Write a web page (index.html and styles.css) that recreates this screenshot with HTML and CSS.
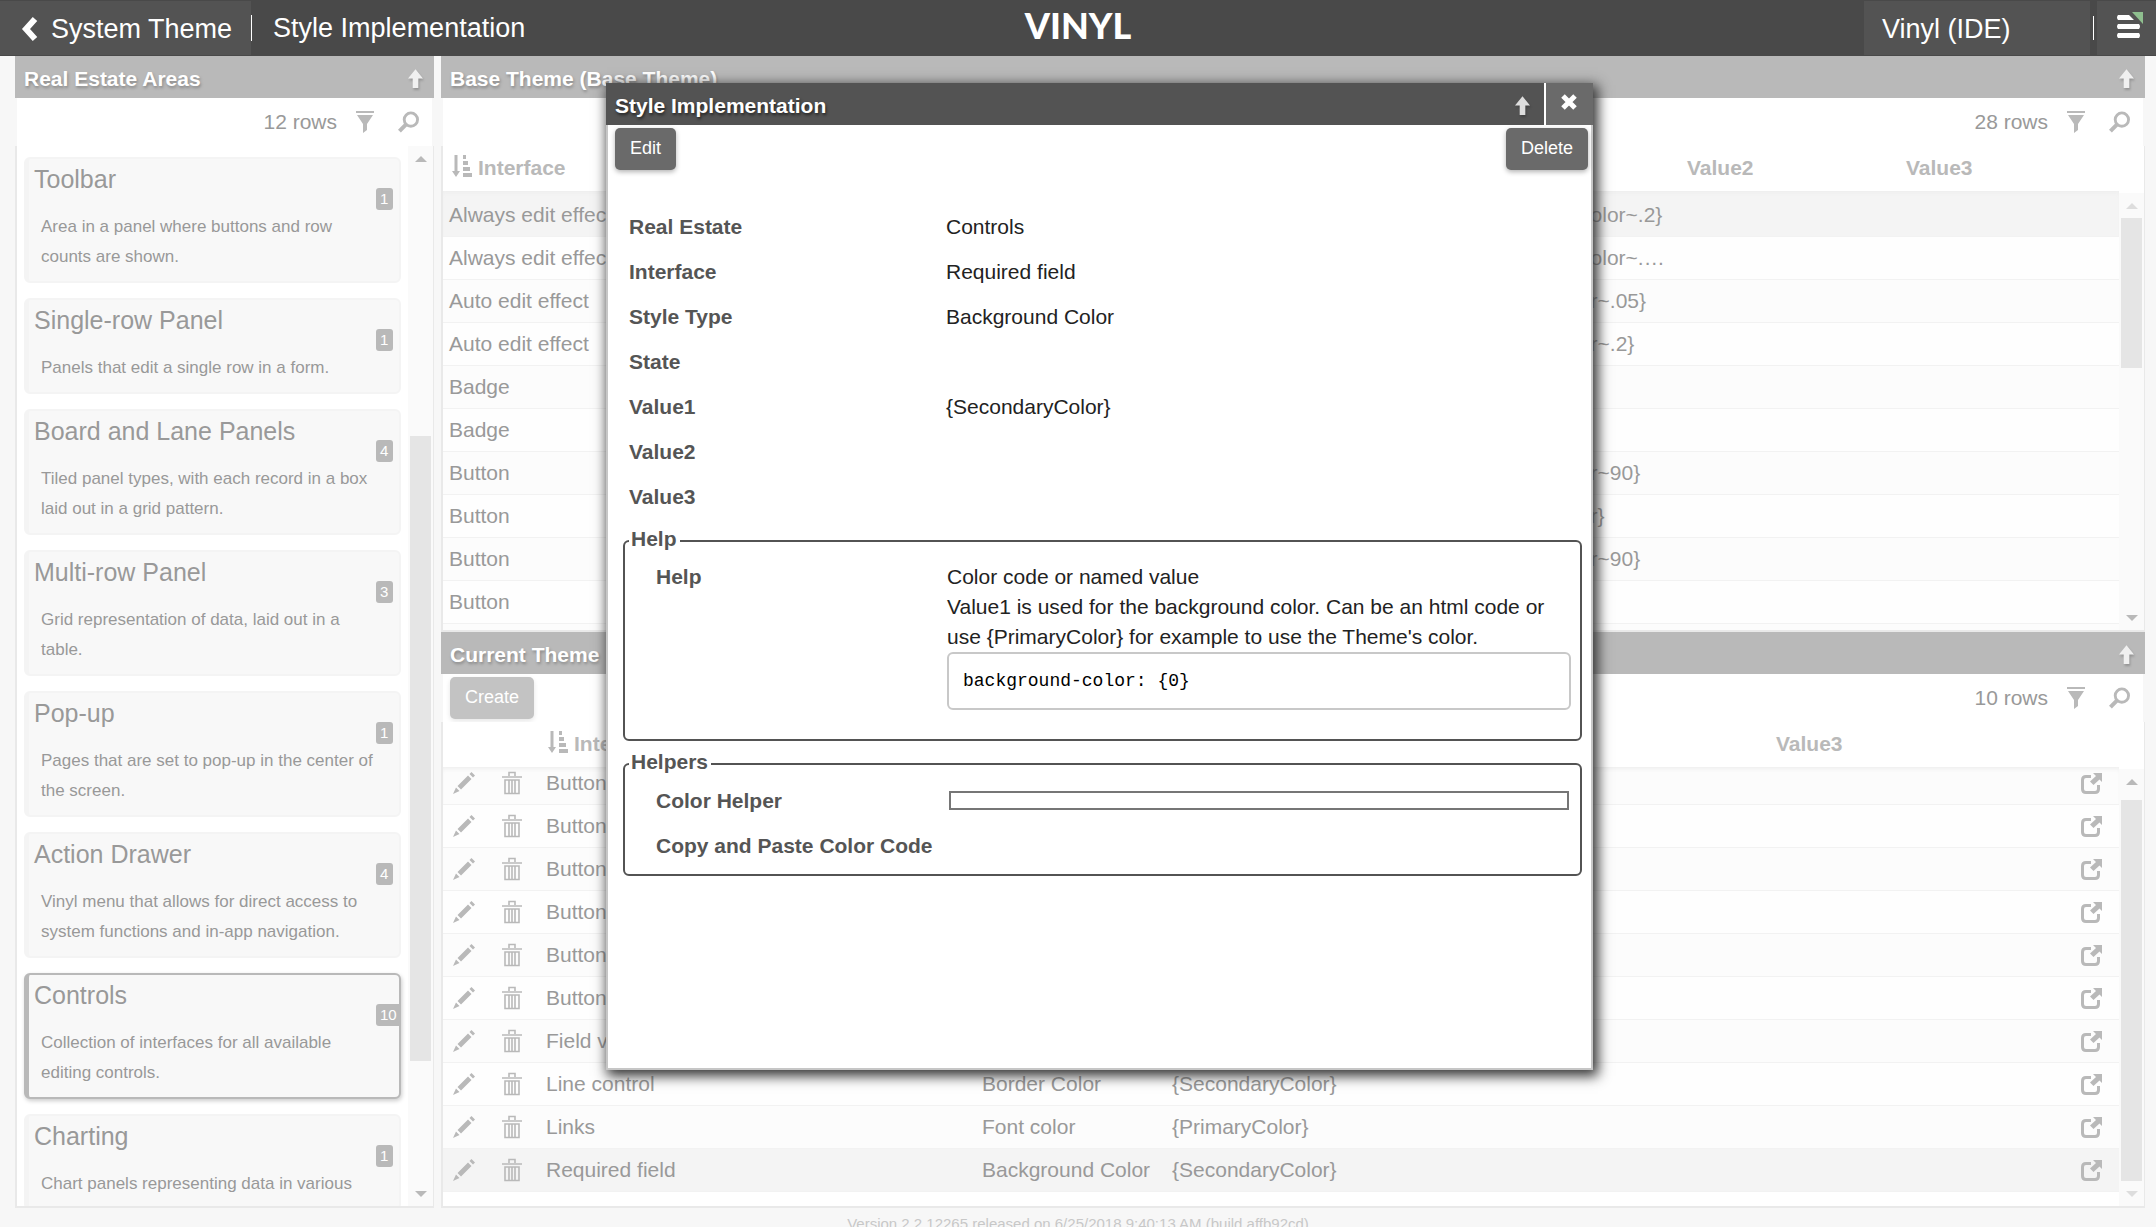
FILE: index.html
```html
<!DOCTYPE html>
<html lang="en">
<head>
    <meta charset="UTF-8">
    <meta name="viewport" content="width=device-width, initial-scale=1.0">
    <title>Style Implementation</title>
    <link rel="stylesheet" href="styles.css">
</head>
<body>
    <!-- shared icons -->
    <svg class="sprite" aria-hidden="true">
        <symbol id="arrow-up" viewBox="0 0 16 20"><path d="M8 0l8 10h-5v10H5V10H0z"/></symbol>
        <symbol id="filter" viewBox="0 0 18 22"><path d="M0 0h18v2H0zM1 4h16l-6 9v6l-4 3v-9z"/></symbol>
        <symbol id="search" viewBox="0 0 22 22"><circle cx="13.500" cy="8.500" r="7" fill="none" stroke="currentColor" stroke-width="3"/><path d="M7 12l3 3-7 7-3-3z"/></symbol>
        <symbol id="sort" viewBox="0 0 20 22"><path d="M2.500 0h3v16H8l-4 6-4-6h2.500zM11 0h3v4h-3zM11 6h5v4h-5zM11 12h7v4h-7zM11 18h9v4h-9z"/></symbol>
        <symbol id="edit" viewBox="0 0 22 22"><path d="M16.500 2L18.500 0 22 3.500l-2 2zM15 3.500L18.500 7 8 17.500 4.500 14zM3 15.500L6.500 19 0 22z"/></symbol>
        <symbol id="trash" viewBox="0 0 20 24"><path d="M7 5V1.500h6V5M0 6h20M3 9h14v13.500H3zM7 9v13M10 9v13M13 9v13" fill="none" stroke="currentColor" stroke-width="1.600"/></symbol>
        <symbol id="open" viewBox="0 0 21 21"><path d="M10 3.500H5Q1.500 3.500 1.500 7v9q0 3.500 3.500 3.500h9q3.500 0 3.500-3.500v-4" fill="none" stroke="currentColor" stroke-width="3"/><path d="M12 0h9v9l-2.500-2.500L12.500 12 9 8.500 15 3z"/></symbol>
    </svg>

    <header class="top-bar">
        <a href="#" class="back">
            <svg class="chevron" viewBox="0 0 18 26"><path d="M14 3L5 13l9 10" fill="none" stroke="currentColor" stroke-width="6"/></svg>
            System Theme
        </a>
        <h1 class="page-title">Style Implementation</h1>
        <div class="logo">VINYL</div>
        <a href="#" class="app-name">Vinyl (IDE)</a>
        <button type="button" class="menu" aria-label="Menu">
            <svg viewBox="0 0 28 28"><path d="M3 3h11l5 5H3q-2-2.500 0-5zM3 12h21q2 2.500 0 5H3q-2-2.500 0-5zM3 21h21q2 2.500 0 5H3q-2-2.500 0-5z"/><path class="corner" d="M17 0h11v12z"/></svg>
        </button>
    </header>

    <main class="layout">
        <section class="panel areas">
            <h2 class="panel-head">Real Estate Areas <svg class="up"><use href="#arrow-up"/></svg></h2>
            <div class="toolbar">
                <span class="count">12 rows</span>
                <button type="button" class="icon-btn" aria-label="Filter"><svg class="filter"><use href="#filter"/></svg></button>
                <button type="button" class="icon-btn" aria-label="Search"><svg class="search"><use href="#search"/></svg></button>
            </div>
            <div class="panel-body">
                <div class="cards">
                    <article class="card">
                        <h3>Toolbar</h3>
                        <p>Area in a panel where buttons and row counts are shown.</p>
                        <span class="badge">1</span>
                    </article>
                    <article class="card">
                        <h3>Single-row Panel</h3>
                        <p>Panels that edit a single row in a form.</p>
                        <span class="badge">1</span>
                    </article>
                    <article class="card">
                        <h3>Board and Lane Panels</h3>
                        <p>Tiled panel types, with each record in a box laid out in a grid pattern.</p>
                        <span class="badge">4</span>
                    </article>
                    <article class="card">
                        <h3>Multi-row Panel</h3>
                        <p>Grid representation of data, laid out in a table.</p>
                        <span class="badge">3</span>
                    </article>
                    <article class="card">
                        <h3>Pop-up</h3>
                        <p>Pages that are set to pop-up in the center of the screen.</p>
                        <span class="badge">1</span>
                    </article>
                    <article class="card">
                        <h3>Action Drawer</h3>
                        <p>Vinyl menu that allows for direct access to system functions and in-app navigation.</p>
                        <span class="badge">4</span>
                    </article>
                    <article class="card active">
                        <h3>Controls</h3>
                        <p>Collection of interfaces for all available editing controls.</p>
                        <span class="badge">10</span>
                    </article>
                    <article class="card">
                        <h3>Charting</h3>
                        <p>Chart panels representing data in various</p>
                        <span class="badge">1</span>
                    </article>
                </div>
                <div class="scrollbar">
                    <div class="step up-step"></div>
                    <div class="track" style="flex-grow: 265"></div>
                    <div class="thumb" style="flex-grow: 625"></div>
                    <div class="track" style="flex-grow: 120"></div>
                    <div class="step down-step"></div>
                </div>
            </div>
        </section>

        <div class="themes">
            <section class="panel">
                <h2 class="panel-head">Base Theme (Base Theme) <svg class="up"><use href="#arrow-up"/></svg></h2>
                <div class="toolbar">
                    <span class="count">28 rows</span>
                    <button type="button" class="icon-btn" aria-label="Filter"><svg class="filter"><use href="#filter"/></svg></button>
                    <button type="button" class="icon-btn" aria-label="Search"><svg class="search"><use href="#search"/></svg></button>
                </div>
                <div class="panel-body">
                    <div class="table-wrap">
                        <table class="grid base-grid">
                            <colgroup>
                                <col class="col-interface"><col class="col-type"><col><col class="col-value"><col class="col-value"><col class="col-value">
                            </colgroup>
                            <thead>
                                <tr><th><svg class="sort"><use href="#sort"/></svg>Interface</th><th></th><th></th><th></th><th>Value2</th><th>Value3</th></tr>
                            </thead>
                            <tbody>
                                <tr class="selected"><td>Always edit effect</td><td></td><td></td><td>{SecondaryColor~.2}</td><td></td><td></td></tr>
                                <tr><td>Always edit effect</td><td></td><td></td><td>{SecondaryColor~.…</td><td></td><td></td></tr>
                                <tr><td>Auto edit effect</td><td></td><td></td><td>{PrimaryColor~.05}</td><td></td><td></td></tr>
                                <tr><td>Auto edit effect</td><td></td><td></td><td>{PrimaryColor~.2}</td><td></td><td></td></tr>
                                <tr><td>Badge</td><td></td><td></td><td></td><td></td><td></td></tr>
                                <tr><td>Badge</td><td></td><td></td><td></td><td></td><td></td></tr>
                                <tr><td>Button</td><td></td><td></td><td>{PrimaryColor~90}</td><td></td><td></td></tr>
                                <tr><td>Button</td><td></td><td></td><td>{PrimaryColor}</td><td></td><td></td></tr>
                                <tr><td>Button</td><td></td><td></td><td>{PrimaryColor~90}</td><td></td><td></td></tr>
                                <tr><td>Button</td><td></td><td></td><td></td><td></td><td></td></tr>
                                <tr><td></td><td></td><td></td><td></td><td></td><td></td></tr>
                            </tbody>
                        </table>
                    </div>
                    <div class="scrollbar below-head">
                        <div class="step up-step disabled"></div>
                        <div class="thumb" style="flex-grow: 150"></div>
                        <div class="track" style="flex-grow: 237"></div>
                        <div class="step down-step"></div>
                    </div>
                </div>
            </section>

            <section class="panel">
                <h2 class="panel-head">Current Theme <svg class="up"><use href="#arrow-up"/></svg></h2>
                <div class="toolbar">
                    <button type="button" class="btn create">Create</button>
                    <span class="count">10 rows</span>
                    <button type="button" class="icon-btn" aria-label="Filter"><svg class="filter"><use href="#filter"/></svg></button>
                    <button type="button" class="icon-btn" aria-label="Search"><svg class="search"><use href="#search"/></svg></button>
                </div>
                <div class="panel-body">
                    <div class="table-wrap">
                        <table class="grid current-grid">
                            <colgroup>
                                <col class="col-icon"><col class="col-icon"><col class="col-name"><col class="col-style"><col class="col-value"><col><col class="col-last"><col class="col-open">
                            </colgroup>
                            <thead>
                                <tr><th></th><th></th><th><svg class="sort"><use href="#sort"/></svg>Interface</th><th></th><th></th><th></th><th>Value3</th><th></th></tr>
                            </thead>
                            <tbody>
                                <tr>
                                    <td><button type="button" class="icon-btn" aria-label="Edit"><svg class="edit"><use href="#edit"/></svg></button></td>
                                    <td><button type="button" class="icon-btn" aria-label="Delete"><svg class="trash"><use href="#trash"/></svg></button></td>
                                    <td>Button</td><td></td><td></td><td></td><td></td>
                                    <td><button type="button" class="icon-btn" aria-label="Open"><svg class="open"><use href="#open"/></svg></button></td>
                                </tr>
                                <tr>
                                    <td><button type="button" class="icon-btn" aria-label="Edit"><svg class="edit"><use href="#edit"/></svg></button></td>
                                    <td><button type="button" class="icon-btn" aria-label="Delete"><svg class="trash"><use href="#trash"/></svg></button></td>
                                    <td>Button</td><td></td><td></td><td></td><td></td>
                                    <td><button type="button" class="icon-btn" aria-label="Open"><svg class="open"><use href="#open"/></svg></button></td>
                                </tr>
                                <tr>
                                    <td><button type="button" class="icon-btn" aria-label="Edit"><svg class="edit"><use href="#edit"/></svg></button></td>
                                    <td><button type="button" class="icon-btn" aria-label="Delete"><svg class="trash"><use href="#trash"/></svg></button></td>
                                    <td>Button</td><td></td><td></td><td></td><td></td>
                                    <td><button type="button" class="icon-btn" aria-label="Open"><svg class="open"><use href="#open"/></svg></button></td>
                                </tr>
                                <tr>
                                    <td><button type="button" class="icon-btn" aria-label="Edit"><svg class="edit"><use href="#edit"/></svg></button></td>
                                    <td><button type="button" class="icon-btn" aria-label="Delete"><svg class="trash"><use href="#trash"/></svg></button></td>
                                    <td>Button</td><td></td><td></td><td></td><td></td>
                                    <td><button type="button" class="icon-btn" aria-label="Open"><svg class="open"><use href="#open"/></svg></button></td>
                                </tr>
                                <tr>
                                    <td><button type="button" class="icon-btn" aria-label="Edit"><svg class="edit"><use href="#edit"/></svg></button></td>
                                    <td><button type="button" class="icon-btn" aria-label="Delete"><svg class="trash"><use href="#trash"/></svg></button></td>
                                    <td>Button</td><td></td><td></td><td></td><td></td>
                                    <td><button type="button" class="icon-btn" aria-label="Open"><svg class="open"><use href="#open"/></svg></button></td>
                                </tr>
                                <tr>
                                    <td><button type="button" class="icon-btn" aria-label="Edit"><svg class="edit"><use href="#edit"/></svg></button></td>
                                    <td><button type="button" class="icon-btn" aria-label="Delete"><svg class="trash"><use href="#trash"/></svg></button></td>
                                    <td>Button</td><td></td><td></td><td></td><td></td>
                                    <td><button type="button" class="icon-btn" aria-label="Open"><svg class="open"><use href="#open"/></svg></button></td>
                                </tr>
                                <tr>
                                    <td><button type="button" class="icon-btn" aria-label="Edit"><svg class="edit"><use href="#edit"/></svg></button></td>
                                    <td><button type="button" class="icon-btn" aria-label="Delete"><svg class="trash"><use href="#trash"/></svg></button></td>
                                    <td>Field value</td><td></td><td></td><td></td><td></td>
                                    <td><button type="button" class="icon-btn" aria-label="Open"><svg class="open"><use href="#open"/></svg></button></td>
                                </tr>
                                <tr>
                                    <td><button type="button" class="icon-btn" aria-label="Edit"><svg class="edit"><use href="#edit"/></svg></button></td>
                                    <td><button type="button" class="icon-btn" aria-label="Delete"><svg class="trash"><use href="#trash"/></svg></button></td>
                                    <td>Line control</td><td>Border Color</td><td>{SecondaryColor}</td><td></td><td></td>
                                    <td><button type="button" class="icon-btn" aria-label="Open"><svg class="open"><use href="#open"/></svg></button></td>
                                </tr>
                                <tr>
                                    <td><button type="button" class="icon-btn" aria-label="Edit"><svg class="edit"><use href="#edit"/></svg></button></td>
                                    <td><button type="button" class="icon-btn" aria-label="Delete"><svg class="trash"><use href="#trash"/></svg></button></td>
                                    <td>Links</td><td>Font color</td><td>{PrimaryColor}</td><td></td><td></td>
                                    <td><button type="button" class="icon-btn" aria-label="Open"><svg class="open"><use href="#open"/></svg></button></td>
                                </tr>
                                <tr class="selected">
                                    <td><button type="button" class="icon-btn" aria-label="Edit"><svg class="edit"><use href="#edit"/></svg></button></td>
                                    <td><button type="button" class="icon-btn" aria-label="Delete"><svg class="trash"><use href="#trash"/></svg></button></td>
                                    <td>Required field</td><td>Background Color</td><td>{SecondaryColor}</td><td></td><td></td>
                                    <td><button type="button" class="icon-btn" aria-label="Open"><svg class="open"><use href="#open"/></svg></button></td>
                                </tr>
                            </tbody>
                        </table>
                    </div>
                    <div class="scrollbar below-head">
                        <div class="step up-step"></div>
                        <div class="track" style="flex-grow: 6"></div>
                        <div class="thumb" style="flex-grow: 382"></div>
                        <div class="step down-step disabled"></div>
                    </div>
                </div>
            </section>
        </div>
    </main>

    <footer class="version">Version 2.2.12265 released on 6/25/2018 9:40:13 AM (build affb92cd)</footer>

    <div class="popup" role="dialog" aria-labelledby="popupTitle">
        <div class="popup-head">
            <h2 id="popupTitle">Style Implementation</h2>
            <svg class="up"><use href="#arrow-up"/></svg>
            <button type="button" class="close" aria-label="Close">
                <svg viewBox="0 0 16 16"><path d="M2 2l12 12M14 2L2 14" fill="none" stroke="currentColor" stroke-width="5"/></svg>
            </button>
        </div>
        <div class="popup-content">
            <div class="popup-tools">
                <button type="button" class="btn">Edit</button>
                <button type="button" class="btn">Delete</button>
            </div>
            <div class="form">
                <dl class="fields">
                    <dt>Real Estate</dt><dd>Controls</dd>
                    <dt>Interface</dt><dd>Required field</dd>
                    <dt>Style Type</dt><dd>Background Color</dd>
                    <dt>State</dt><dd></dd>
                    <dt>Value1</dt><dd>{SecondaryColor}</dd>
                    <dt>Value2</dt><dd></dd>
                    <dt>Value3</dt><dd></dd>
                </dl>
                <fieldset class="group help">
                    <legend>Help</legend>
                    <div class="group-row">
                        <div class="label">Help</div>
                        <div class="help-text">
                            <p>Color code or named value</p>
                            <p>Value1 is used for the background color. Can be an html code or use {PrimaryColor} for example to use the Theme's color.</p>
                            <pre>background-color: {0}</pre>
                        </div>
                    </div>
                </fieldset>
                <fieldset class="group helpers">
                    <legend>Helpers</legend>
                    <div class="group-row">
                        <label class="label" for="colorHelper">Color Helper</label>
                        <input type="text" id="colorHelper" name="colorHelper">
                    </div>
                    <div class="group-row">
                        <div class="label">Copy and Paste Color Code</div>
                    </div>
                </fieldset>
            </div>
        </div>
    </div>
</body>
</html>
```
FILE: styles.css
```css
* {
    box-sizing: border-box;
}

body {
    margin: 0;
    height: 100vh;
    overflow: hidden;
    display: flex;
    flex-direction: column;
    position: relative;
    background-color: #f7f7f7;
    color: #999;
    font-family: "Liberation Sans", Arial, sans-serif;
    font-size: 21px;
}

h1, h2, h3, p, dl, dd, pre {
    margin: 0;
}

button {
    font-family: inherit;
    cursor: pointer;
}

svg {
    display: block;
    fill: currentColor;
}

.sprite {
    position: absolute;
    width: 0;
    height: 0;
}

/* top bar */
.top-bar {
    flex: none;
    position: relative;
    display: flex;
    align-items: center;
    height: 56px;
    padding: 1px 0;
    background-color: #494949;
    color: #fff;
    font-size: 27px;
}

.top-bar a {
    color: #fff;
    text-decoration: none;
}

.back {
    display: flex;
    align-items: center;
    gap: 12px;
    height: 54px;
    padding: 2px 19px 0 21px;
    background-color: #535353;
}

.chevron {
    width: 18px;
    height: 26px;
}

.page-title {
    padding-left: 21px;
    border-left: 1px solid #fff;
    font-size: 27px;
    font-weight: normal;
    line-height: 26px;
}

.logo {
    position: absolute;
    left: 50%;
    top: 3px;
    transform: translateX(-50%);
    font-family: Lato, "Liberation Sans", sans-serif;
    font-size: 36px;
    font-weight: 900;
    line-height: 44px;
}

.app-name {
    display: flex;
    align-items: center;
    width: 226px;
    height: 54px;
    margin-left: auto;
    padding: 2px 0 0 18px;
    background-color: #535353;
}

.menu {
    position: relative;
    width: 59px;
    height: 54px;
    margin-left: 7px;
    padding: 0 0 4px 18px;
    border: 0;
    background-color: #535353;
    color: #fff;
}

.menu::before {
    content: "";
    position: absolute;
    left: -4px;
    top: 15px;
    width: 1px;
    height: 24px;
    background-color: #fff;
}

.menu svg {
    width: 28px;
    height: 28px;
}

.corner {
    fill: #8fbf8f;
}

/* panels */
.layout {
    flex: 1;
    min-height: 0;
    display: flex;
    gap: 7px;
    padding: 0 11px 0 15px;
}

.areas {
    flex: none;
    width: 419px;
}

.themes {
    flex: 1;
    min-width: 0;
    display: flex;
    flex-direction: column;
}

.panel {
    display: flex;
    flex-direction: column;
}

.themes .panel {
    flex: 1 1 0;
    min-height: 0;
}

.panel-head {
    flex: none;
    display: flex;
    align-items: center;
    justify-content: space-between;
    height: 42px;
    padding: 3px 11px 0 9px;
    background-color: #b9b9b9;
    color: #fff;
    font-size: 21px;
    text-shadow: 1px 2px 3px #888;
}

.up {
    width: 15px;
    height: 19px;
    color: #f0f0f0;
    filter: drop-shadow(1px 2px 1px rgba(0, 0, 0, 0.2));
}

.toolbar {
    flex: none;
    display: flex;
    align-items: center;
    height: 48px;
    margin: 0 2px;
    padding: 0 13px 0 7px;
    background-color: #fff;
}

.count {
    margin-left: auto;
    margin-right: 19px;
}

.icon-btn {
    display: block;
    padding: 0;
    border: 0;
    background: none;
    color: #b9b9b9;
}

.filter {
    width: 18px;
    height: 22px;
}

.search {
    width: 21px;
    height: 22px;
    margin-left: 24px;
}

.btn {
    height: 42px;
    padding: 0 15px 2px;
    border: 0;
    border-radius: 5px;
    background-color: #6a6a6a;
    color: #fff;
    font-size: 18px;
    box-shadow: 0 2px 5px rgba(0, 0, 0, 0.3);
}

.btn.create {
    background-color: #c3c3c3;
    box-shadow: 0 2px 5px rgba(0, 0, 0, 0.1);
}

.panel-body {
    flex: 1;
    min-height: 0;
    display: flex;
    overflow: hidden;
    border: solid #e9e9e9;
    border-width: 0 1px 2px 2px;
    background-color: #fff;
}

/* real estate cards */
.cards {
    flex: 1;
    display: flex;
    flex-direction: column;
    gap: 15px;
    padding: 11px 7px 0;
    overflow: hidden;
}

.card {
    flex: none;
    position: relative;
    padding: 5px 15px 9px 5px;
    overflow: hidden;
    border: 2px solid #f4f4f4;
    border-left-width: 5px;
    border-radius: 6px;
    background-color: #f8f8f8;
}

.card.active {
    border-color: #b9b9b9;
    box-shadow: 1px 2px 4px rgba(0, 0, 0, 0.2);
}

.card h3 {
    font-size: 25px;
    font-weight: normal;
    line-height: 30px;
}

.card p {
    padding: 18px 0 0 7px;
    font-size: 17px;
    line-height: 30px;
}

.badge {
    position: absolute;
    top: 29px;
    left: calc(100% - 23px);
    padding: 0 5px 0 4px;
    border-radius: 3px;
    background-color: #b9b9b9;
    color: #fff;
    font-size: 15px;
    line-height: 22px;
}

/* scrollbars */
.scrollbar {
    flex: none;
    display: flex;
    flex-direction: column;
    width: 25px;
    padding: 0 2px;
    background-color: #fafafa;
}

.scrollbar.below-head {
    margin-top: 47px;
}

.step {
    flex: none;
    display: flex;
    align-items: center;
    justify-content: center;
    height: 25px;
}

.step::before {
    content: "";
    border: solid transparent;
    border-width: 0 6px;
}

.up-step::before {
    border-bottom: 6px solid #b9b9b9;
}

.down-step::before {
    border-top: 6px solid #b9b9b9;
}

.up-step.disabled::before {
    border-bottom-color: #ddd;
}

.down-step.disabled::before {
    border-top-color: #ddd;
}

.thumb {
    flex-basis: 0;
    background-color: #e5e5e5;
}

.track {
    flex-basis: 0;
}

/* tables */
.table-wrap {
    flex: 1;
    min-width: 0;
    overflow: hidden;
}

.grid {
    width: 100%;
    table-layout: fixed;
    border-collapse: separate;
    border-spacing: 0;
}

.grid th {
    height: 45px;
    padding: 0 6px 2px;
    color: #b9b9b9;
    text-align: left;
}

.grid td {
    height: 43px;
    padding: 0 6px;
    border-bottom: 1px solid #f2f2f2;
    white-space: nowrap;
}

.grid tbody tr {
    background-color: #fefefe;
}

.grid tbody tr:nth-child(odd) {
    background-color: #fcfcfc;
}

.grid tbody tr.selected {
    background-color: #f4f4f4;
}

.grid tbody tr:first-child {
    box-shadow: inset 0 4px 4px -2px #eee;
}

.base-grid tbody tr:first-child td {
    height: 46px;
    padding-top: 3px;
}

/* first row is partly scrolled under the header */
.current-grid tbody tr:first-child td {
    height: 38px;
    padding-bottom: 5px;
}

.sort {
    display: inline-block;
    width: 20px;
    height: 22px;
    margin: 0 6px 0 3px;
    vertical-align: -2px;
}

.col-interface { width: 400px; }
.col-type { width: 300px; }
.col-value { width: 219px; }
.col-icon { width: 48px; }
.col-name { width: 436px; }
.col-style { width: 190px; }
.col-last { width: 295px; }
.col-open { width: 54px; }

.current-grid td {
    padding-left: 7px;
}

.edit {
    width: 22px;
    height: 22px;
    margin-left: 3px;
}

.trash {
    width: 20px;
    height: 24px;
    margin-left: 4px;
}

.open {
    width: 21px;
    height: 21px;
    margin-left: 9px;
}

.version {
    flex: none;
    height: 19px;
    padding-top: 7px;
    overflow: hidden;
    color: #c8c8c8;
    font-size: 15px;
    line-height: 18px;
    text-align: center;
}

/* popup */
.popup {
    position: absolute;
    top: 83px;
    right: 563px;
    bottom: 157px;
    left: 606px;
    display: flex;
    flex-direction: column;
    box-shadow: 3px 4px 12px 2px #333;
    color: #222;
}

.popup-head {
    flex: none;
    display: flex;
    align-items: center;
    height: 42px;
    padding-left: 9px;
    background-color: #535353;
    color: #fff;
}

.popup-head h2 {
    flex: 1;
    padding-top: 3px;
    font-size: 21px;
    text-shadow: 1px 2px 3px #222;
}

.popup-head .up {
    margin: 2px 14px 0 0;
    color: #ddd;
}

.close {
    width: 49px;
    height: 42px;
    padding: 0 0 12px 15px;
    border: 0;
    border-left: 2px solid #fff;
    background-color: #6a6a6a;
    color: #fff;
}

.close svg {
    width: 16px;
    height: 16px;
    margin-top: 7px;
}

.popup-content {
    flex: 1;
    border: solid #c6c6c6;
    border-width: 0 2px 2px;
    background-color: #fff;
}

.popup-tools {
    display: flex;
    justify-content: space-between;
    padding: 3px 3px 3px 7px;
}

.form {
    padding: 31px 9px 0 15px;
}

.fields {
    display: grid;
    grid-template-columns: 317px 1fr;
    grid-auto-rows: 45px;
    align-items: center;
    padding: 0 0 8px 6px;
}

.fields dt,
.label,
.group legend {
    color: #555;
    font-weight: bold;
}

.group {
    min-width: 0;
    margin: 0 0 9px;
    padding: 0;
    border: 2px solid #535353;
    border-radius: 6px;
}

.group legend {
    margin-left: 4px;
    padding: 0 3px 4px 2px;
    line-height: 24px;
}

.group-row {
    display: grid;
    grid-template-columns: 291px 1fr;
    padding: 0 9px 0 31px;
    line-height: 30px;
}

.help .group-row {
    padding-top: 7px;
    padding-bottom: 29px;
}

.helpers {
    padding-bottom: 6px;
}

.helpers .group-row {
    align-items: center;
    height: 45px;
}

.help-text pre {
    padding: 14px;
    border: 2px solid #c8c8c8;
    border-radius: 6px;
    color: #000;
    font-family: "Liberation Mono", monospace;
    font-size: 18px;
    line-height: 26px;
}

#colorHelper {
    height: 19px;
    margin: 0 2px;
    border: 2px solid #767676;
    background-color: #fff;
}
```
